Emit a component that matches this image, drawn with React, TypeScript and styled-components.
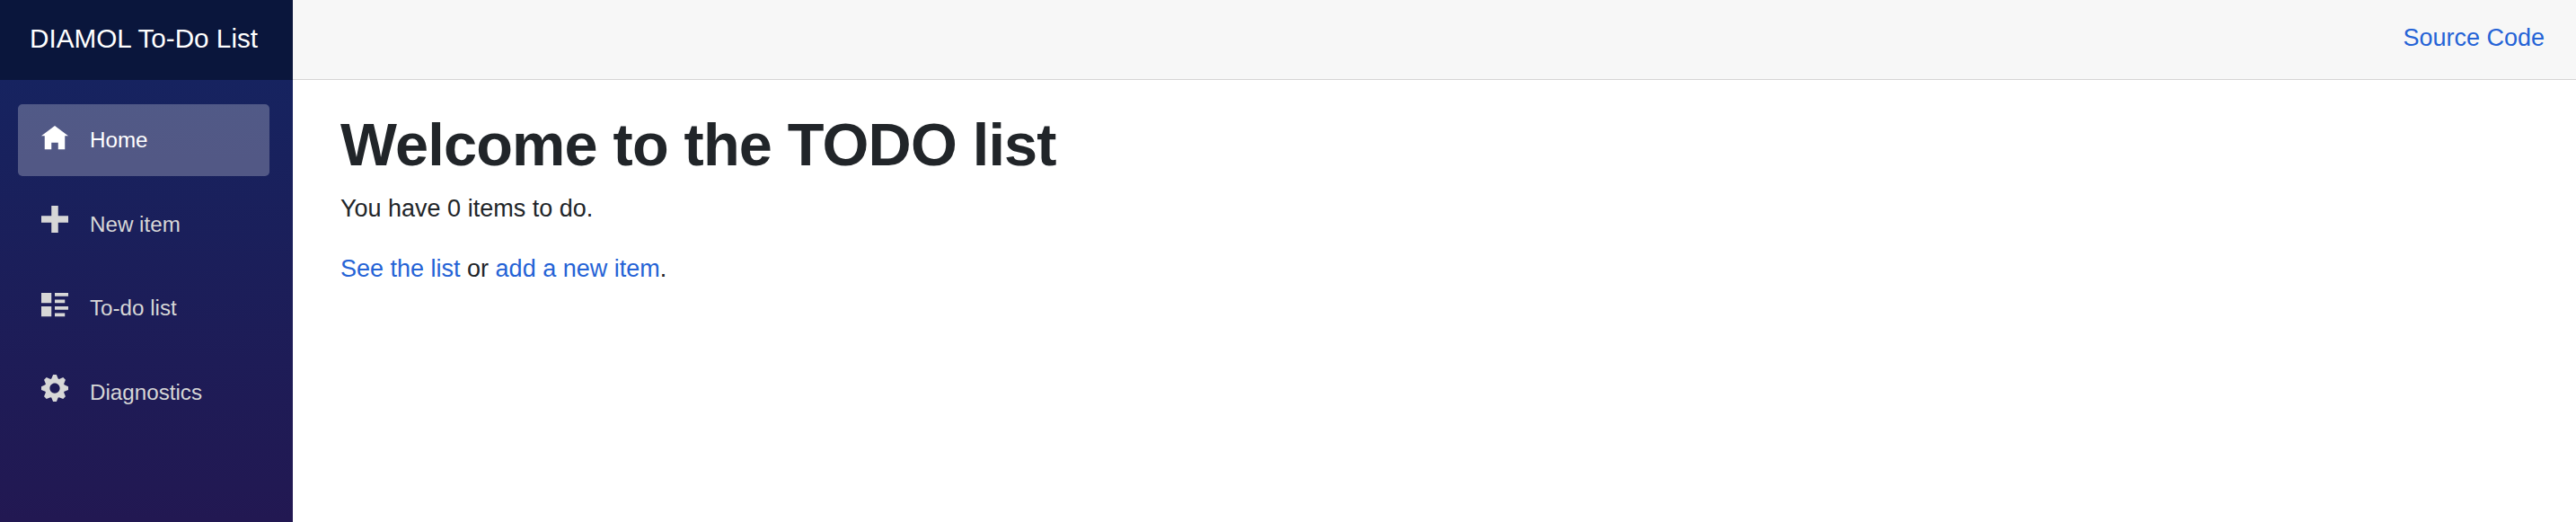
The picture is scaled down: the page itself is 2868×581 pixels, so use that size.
import React from 'react'
import styled, { createGlobalStyle } from 'styled-components'

const GlobalStyle = createGlobalStyle`
  html, body {
    margin: 0;
    padding: 0;
    height: 100%;
  }
  body {
    font-family: "Liberation Sans", Arial, sans-serif;
    font-size: 27px;
    line-height: 40px;
    color: #212529;
    background: #fff;
  }
`

const Page = styled.div`
  display: flex;
  height: 581px;
  overflow: hidden;
`

const Sidebar = styled.aside`
  width: 326px;
  flex-shrink: 0;
  background: linear-gradient(180deg, #142562 0%, #221852 100%);
`

const Brand = styled.div`
  height: 85px;
  padding: 0 0 4px 33px;
  display: flex;
  align-items: center;
  background: #0a163c;
  color: #fff;
  font-size: 29.7px;
`

const NavList = styled.ul`
  list-style: none;
  margin: 0;
  padding: 27px 26px 0 20px;
  display: flex;
  flex-direction: column;
  gap: 13.6px;
`

const NavLink = styled.a<{ $active?: boolean }>`
  display: flex;
  align-items: center;
  height: 80px;
  padding-left: 26px;
  border-radius: 5px;
  font-size: 24.2px;
  color: ${p => (p.$active ? '#fff' : '#d7d7d7')};
  background: ${p => (p.$active ? 'rgba(255, 255, 255, 0.25)' : 'transparent')};
  text-decoration: none;
`

const NavIcon = styled.svg<{ $lift: number }>`
  width: 30px;
  height: 30px;
  margin-right: 24px;
  margin-top: ${p => p.$lift}px;
  fill: currentColor;
  flex-shrink: 0;
`

const Main = styled.main`
  flex: 1;
  min-width: 0;
`

const TopRow = styled.header`
  height: 84px;
  display: flex;
  align-items: center;
  justify-content: flex-end;
  padding: 0 35px 4px 0;
  background: #f7f7f7;
  border-bottom: 1px solid #d6d5d5;
`

const Link = styled.a`
  color: #2563d6;
  text-decoration: none;
`

const Content = styled.section`
  padding: 32px 53px 0;
`

const Title = styled.h1`
  margin: 0 0 11px;
  font-size: 66.7px;
  line-height: 80px;
  font-weight: 700;
  letter-spacing: -0.82px;
  color: #212529;
`

const Paragraph = styled.p`
  margin: 0 0 26.67px;
`

const navItems = [
  {
    label: 'Home',
    active: true,
    lift: -2,
    icon: 'M4 0l-4 3h1v4h2v-2h2v2h2v-4.03l1 .03-4-3z',
  },
  {
    label: 'New item',
    lift: -11,
    icon: 'M3 0v3h-3v2h3v3h2v-3h3v-2h-3v-3h-2z',
  },
  {
    label: 'To-do list',
    lift: -4,
    icon: 'M0 0v3h3v-3h-3zm4 0v1h4v-1h-4zm0 2v1h3v-1h-3zm-4 2v3h3v-3h-3zm4 0v1h4v-1h-4zm0 2v1h3v-1h-3z',
  },
  {
    label: 'Diagnostics',
    lift: -10,
    icon: 'M3.5 0l-.5 1.19c-.1.03-.19.08-.28.13l-1.19-.5-.72.72.5 1.19c-.05.1-.09.18-.13.28l-1.19.5v1l1.19.5c.04.1.08.18.13.28l-.5 1.19.72.72 1.19-.5c.09.04.18.09.28.13l.5 1.19h1l.5-1.19c.09-.04.19-.08.28-.13l1.19.5.72-.72-.5-1.19c.04-.09.09-.19.13-.28l1.19-.5v-1l-1.19-.5c-.03-.09-.08-.19-.13-.28l.5-1.19-.72-.72-1.19.5c-.09-.04-.19-.09-.28-.13l-.5-1.19h-1zm.5 2.5c.83 0 1.5.67 1.5 1.5s-.67 1.5-1.5 1.5-1.5-.67-1.5-1.5.67-1.5 1.5-1.5z',
  },
]

export default function App() {
  return (
    <Page>
      <GlobalStyle />
      <Sidebar>
        <Brand>DIAMOL To-Do List</Brand>
        <NavList>
          {navItems.map(item => (
            <li key={item.label}>
              <NavLink href="#" $active={item.active}>
                <NavIcon viewBox="0 0 8 8" $lift={item.lift}>
                  <path d={item.icon} />
                </NavIcon>
                {item.label}
              </NavLink>
            </li>
          ))}
        </NavList>
      </Sidebar>
      <Main>
        <TopRow>
          <Link href="#">Source Code</Link>
        </TopRow>
        <Content>
          <Title>Welcome to the TODO list</Title>
          <Paragraph>You have 0 items to do.</Paragraph>
          <Paragraph>
            <Link href="#">See the list</Link> or <Link href="#">add a new item</Link>.
          </Paragraph>
        </Content>
      </Main>
    </Page>
  )
}
